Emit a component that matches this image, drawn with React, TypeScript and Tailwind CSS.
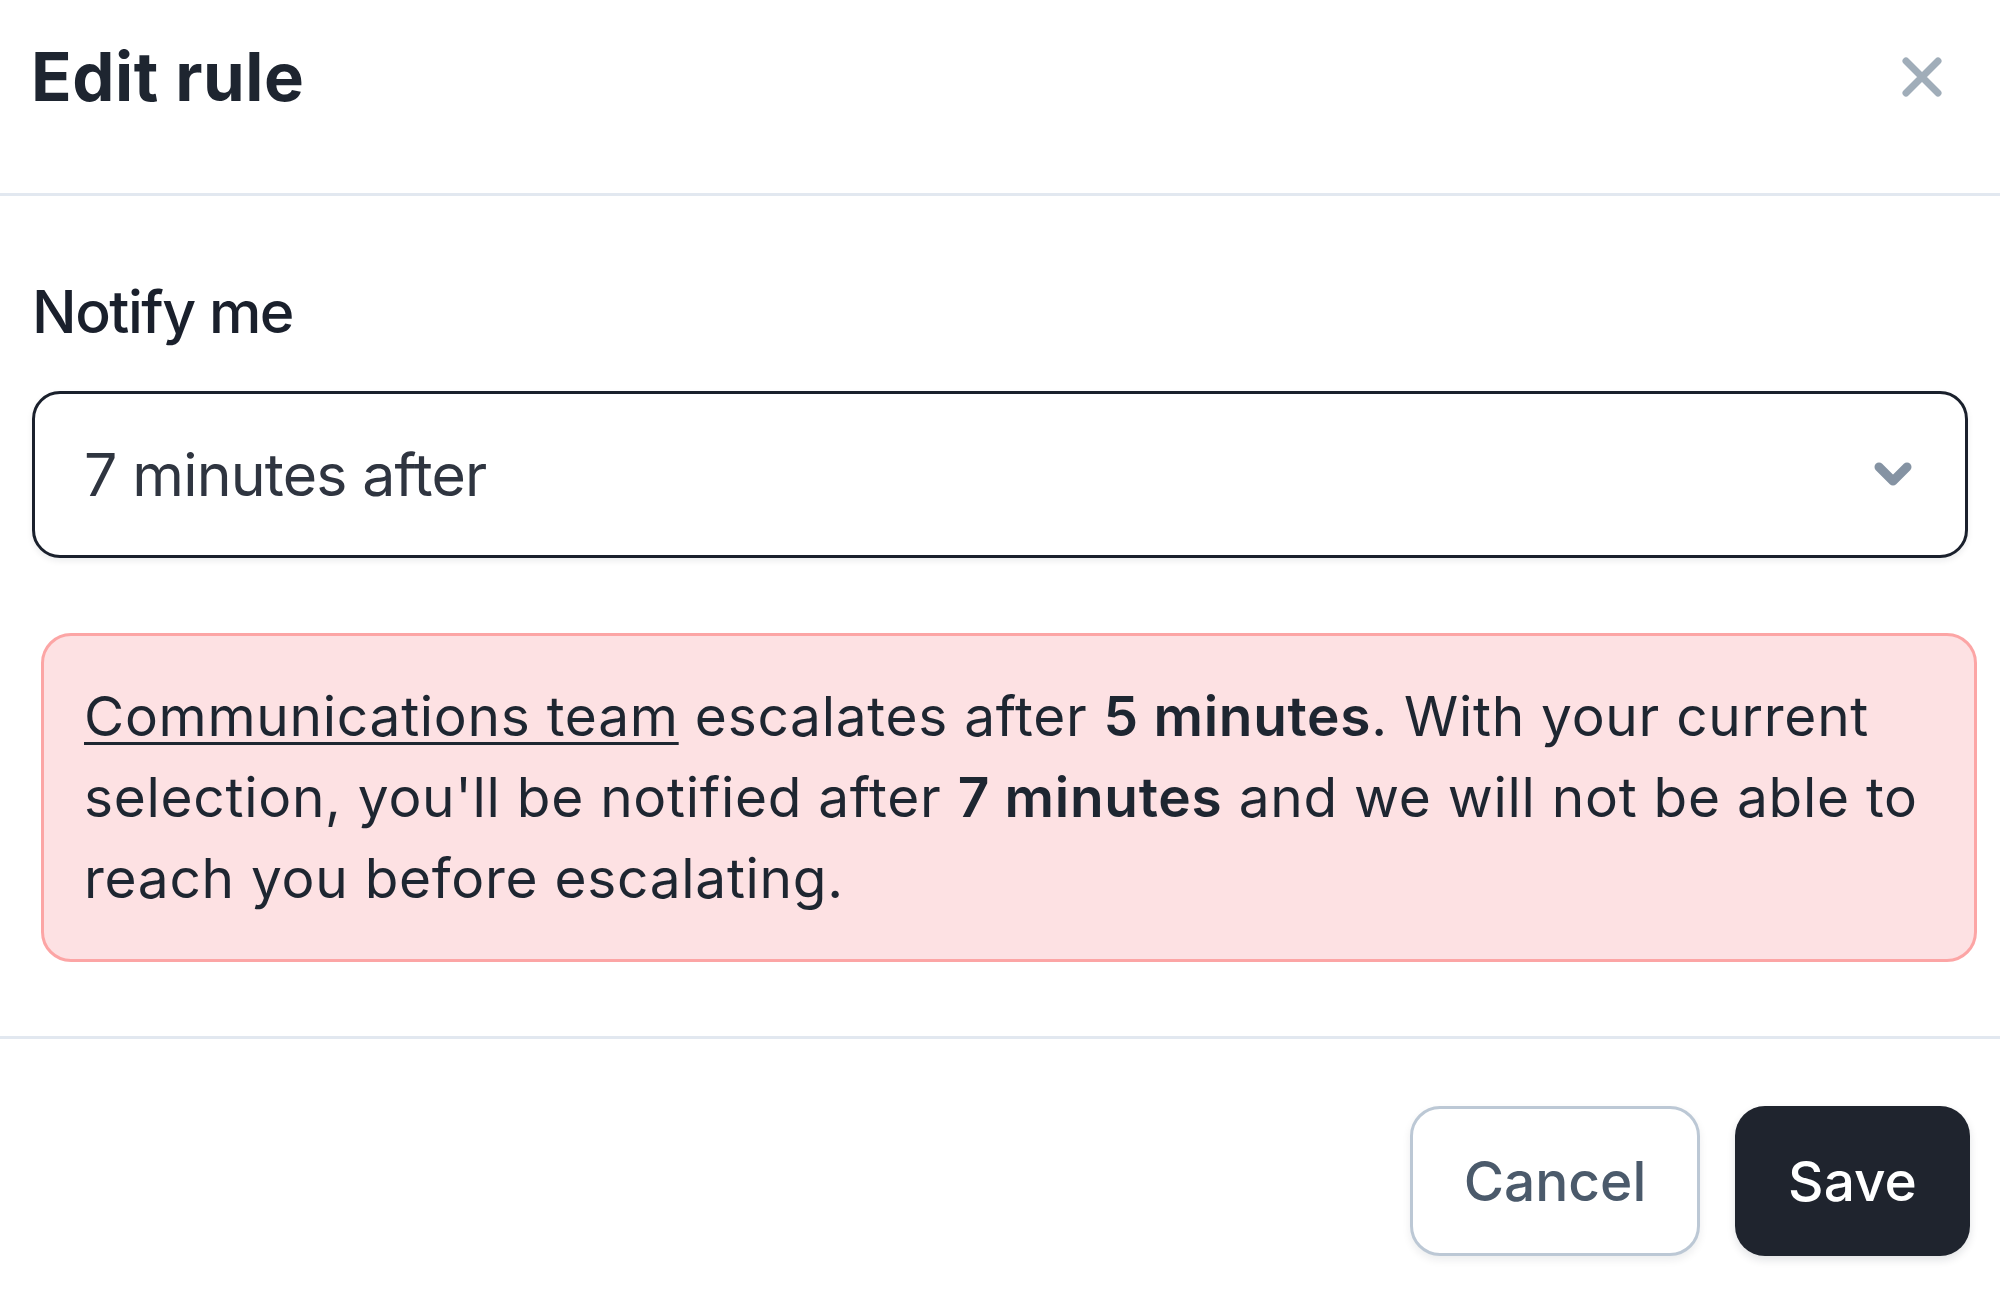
export default function App() {
  return (
    <div className="min-h-screen w-full bg-white font-['Inter',sans-serif] text-[#1e2530]">
      {/* header */}
      <header className="border-b-[3px] border-[#e2e8f0] pb-[40px]">
        <div className="flex h-[153px] items-center justify-between pl-[31px] pr-[58px]">
          <h1 className="text-[67px] font-bold leading-none tracking-[0.008em]">Edit rule</h1>
          <button aria-label="Close" className="text-[#a0adb9]">
            <svg width="40" height="40" viewBox="0 0 40 40" fill="none" stroke="currentColor" strokeWidth="7" strokeLinecap="round">
              <path d="M4 4L36 36M36 4L4 36" />
            </svg>
          </button>
        </div>
      </header>

      {/* body */}
      <div className="flex flex-col pl-[32px] pr-[32px] pt-[80px] pb-[74px]">
        <label className="text-[59px] font-medium leading-[71px] tracking-[-0.025em] text-[#1a202c]">Notify me</label>

        <div className="mt-[44px] flex h-[167px] items-center justify-between rounded-[28px] border-[3px] border-[#1a202c] bg-white pl-[49px] pr-[53px] shadow-[0_3px_6px_rgba(15,23,42,0.08)]">
          <span className="text-[59px] leading-none tracking-[-0.014em] text-[#2f3540]">7 minutes after</span>
          <svg width="38" height="26" viewBox="0 0 38 26" fill="none" stroke="#8593a3" strokeWidth="9" strokeLinecap="round" strokeLinejoin="round">
            <path d="M5 5L19 19L33 5" />
          </svg>
        </div>

        <div className="ml-[9px] mr-[-9px] mt-[75px] rounded-[30px] border-[3px] border-[#fca5a5] bg-[#fde1e3] pb-[40px] pl-[40px] pr-[38px] pt-[40px]">
          <p className="text-[55px] leading-[81px] tracking-[0.013em] text-[#1e2631]">
            <a className="underline decoration-[3px] underline-offset-[6px]">Communications team</a> escalates after{" "}
            <strong className="font-semibold">5 minutes</strong>. With your current selection, you'll be notified after{" "}
            <strong className="font-semibold">7 minutes</strong> and we will not be able to reach you before escalating.
          </p>
        </div>
      </div>

      {/* footer */}
      <footer className="flex justify-end gap-[35px] border-t-[3px] border-[#e2e8f0] pb-[44px] pl-[32px] pr-[30px] pt-[67px]">
        <button className="flex h-[150px] w-[290px] items-center justify-center rounded-[30px] border-[3px] border-[#bcc8d5] bg-white text-[55px] font-medium text-[#4b5a6b] shadow-[0_4px_8px_rgba(15,23,42,0.08)]">
          Cancel
        </button>
        <button className="flex h-[150px] w-[235px] items-center justify-center rounded-[30px] bg-[#1f242e] text-[55px] font-medium text-white shadow-[0_4px_8px_rgba(15,23,42,0.12)]">
          Save
        </button>
      </footer>
    </div>
  );
}
